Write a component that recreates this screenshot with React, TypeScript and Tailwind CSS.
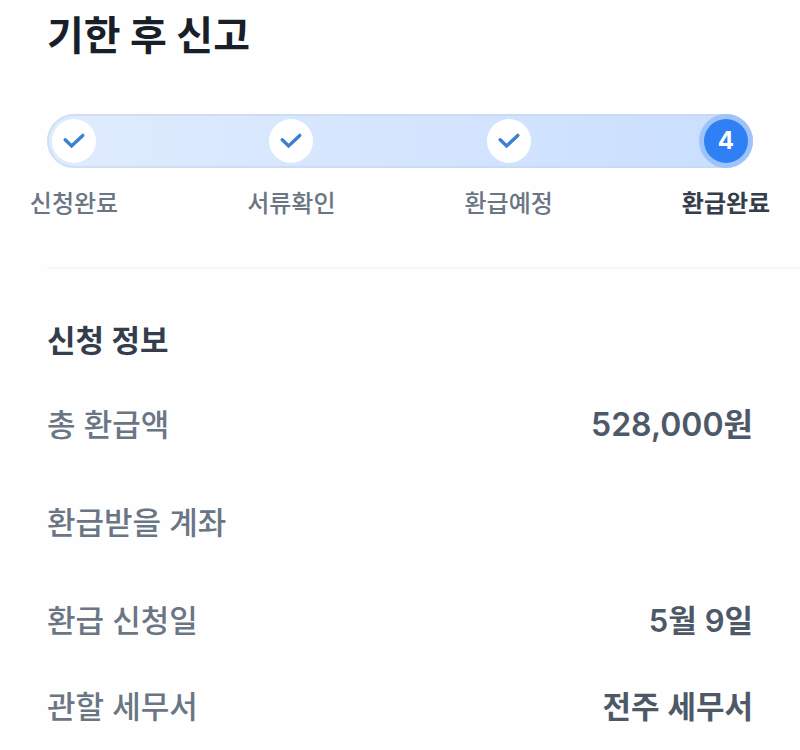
import React from "react";
import { clsx } from "clsx";

interface Step {
  label: string;
  done: boolean;
}

interface InfoRow {
  label: string;
  value?: string;
  isAmount?: boolean;
  spacious?: boolean;
}

const steps: Step[] = [
  { label: "신청완료", done: true },
  { label: "서류확인", done: true },
  { label: "환급예정", done: true },
  { label: "환급완료", done: false },
];

const rows: InfoRow[] = [
  { label: "총 환급액", value: "528,000원", isAmount: true, spacious: true },
  { label: "환급받을 계좌", spacious: true },
  { label: "환급 신청일", value: "5월 9일" },
  { label: "관할 세무서", value: "전주 세무서" },
];

const CheckIcon: React.FC = () => (
  <svg width="24" height="20" viewBox="0 0 24 20" fill="none" aria-hidden="true">
    <path
      d="M3.2 8.8 L9.6 15 L20.8 4.4"
      stroke="#3d7fd0"
      strokeWidth="3.4"
      strokeLinecap="round"
    />
  </svg>
);

const ProgressSteps: React.FC<{ steps: Step[] }> = ({ steps }) => (
  <div>
    <div className="flex justify-between rounded-full bg-linear-to-r from-[#dfecfd] to-[#c9deff] inset-ring-2 inset-ring-[#c8d6ec]/60">
      {steps.map((step, index) => (
        <div
          key={step.label}
          className={clsx(
            "flex size-[54px] items-center justify-center rounded-full",
            !step.done && "bg-[#9dc3fa]"
          )}
        >
          <div
            className={clsx(
              "flex size-11 items-center justify-center rounded-full",
              step.done ? "bg-white" : "bg-[#2f80f5]"
            )}
          >
            {step.done ? (
              <CheckIcon />
            ) : (
              <span className="text-2xl font-bold text-white">{index + 1}</span>
            )}
          </div>
        </div>
      ))}
    </div>
    <ol className="mt-[18px] flex justify-between">
      {steps.map((step) => (
        <li
          key={step.label}
          className={clsx(
            "flex w-[54px] justify-center text-2xl leading-9 whitespace-nowrap",
            step.done
              ? "font-medium text-[#6b7684]"
              : "font-bold text-[#333d4b]"
          )}
        >
          {step.label}
        </li>
      ))}
    </ol>
  </div>
);

export default function App() {
  return (
    <main
      lang="ko"
      className="min-h-screen bg-[#fefefe] pb-5 pl-[47px] font-['Inter','Noto_Sans_CJK_KR',sans-serif]"
    >
      <header className="pt-2 pr-[47px]">
        <h1 className="text-[40px] leading-14 font-bold text-[#191f28]">
          기한 후 신고
        </h1>
      </header>

      <section className="mt-[50px] border-b-2 border-[#f4f5f7] pr-[47px] pb-[45px]">
        <ProgressSteps steps={steps} />
      </section>

      <section className="pt-[50px] pr-[47px]">
        <h2 className="text-[31px] leading-11 font-bold text-[#333d4b]">
          신청 정보
        </h2>
        <dl className="mt-10 flex flex-col gap-[42px]">
          {rows.map((row) => (
            <div
              key={row.label}
              className={clsx(
                "flex justify-between leading-11",
                row.spacious && "pb-3"
              )}
            >
              <dt className="text-[31px] font-medium text-[#6b7684]">
                {row.label}
              </dt>
              <dd
                className={clsx(
                  "font-semibold text-[#4e5968]",
                  row.isAmount ? "text-[32px]" : "text-[31px]"
                )}
              >
                {row.value}
              </dd>
            </div>
          ))}
        </dl>
      </section>
    </main>
  );
}
